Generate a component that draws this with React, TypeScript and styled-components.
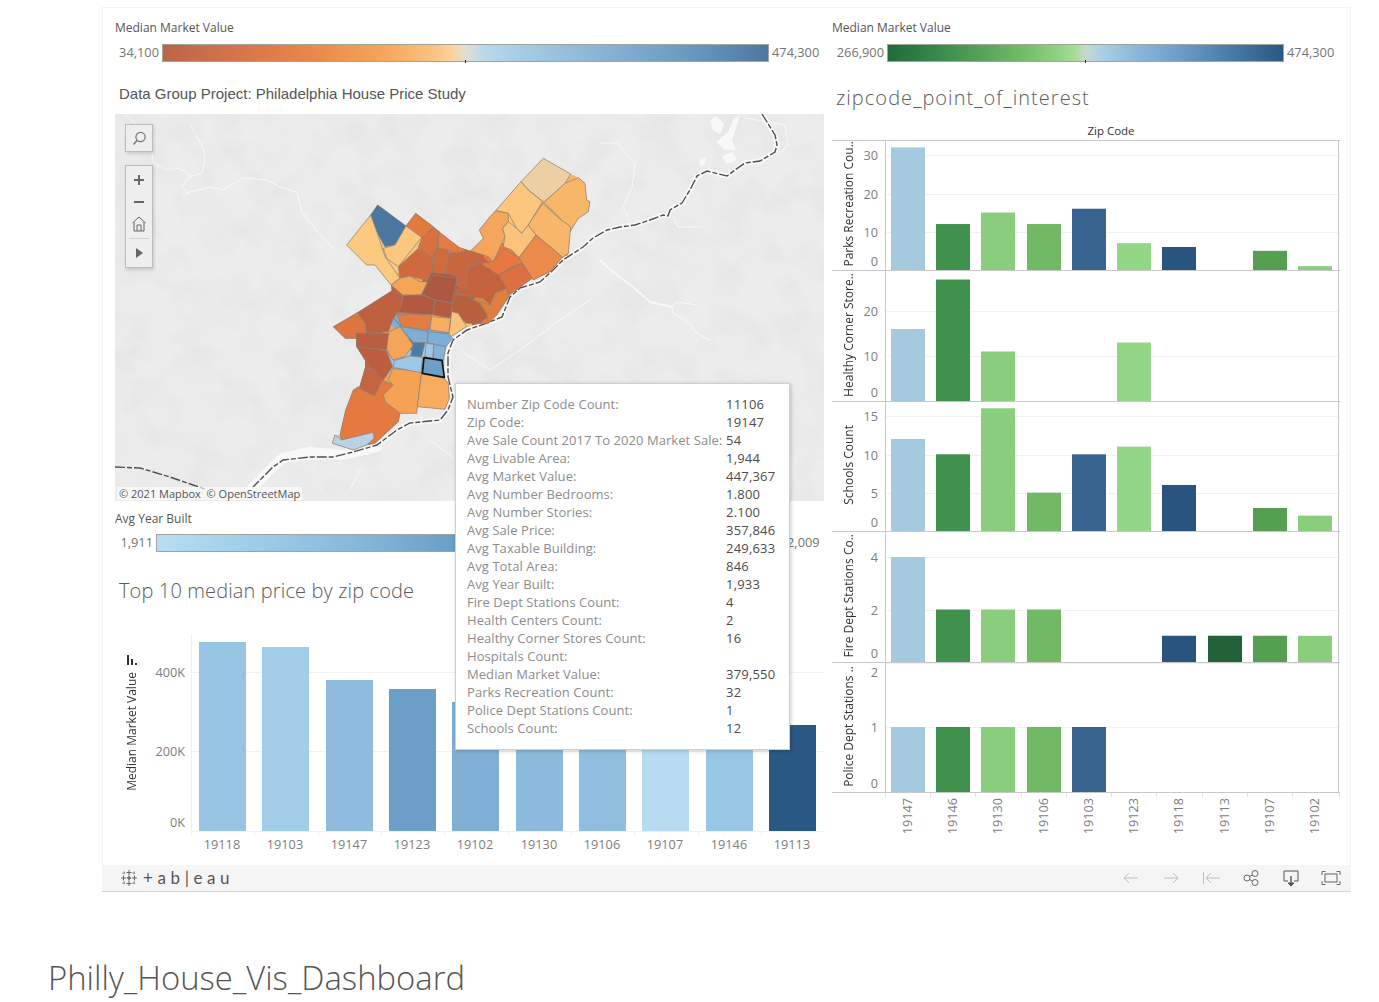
import React from "react";
import styled, { createGlobalStyle } from "styled-components";

const Global = createGlobalStyle`
  html, body { margin: 0; padding: 0; background: #fff; }
  body { font-family: "Open Sans", "Liberation Sans", sans-serif; overflow: hidden; }
`;

const Page = styled.div`
  width: 1379px;
  height: 1002px;
  padding-top: 7px;
  box-sizing: border-box;
  overflow: hidden;
`;
const VizFrame = styled.div`
  position: relative;
  box-sizing: border-box;
  width: 1249px;
  height: 858px;
  margin-left: 102px;
  border: 1px solid #f3f3f3;
  border-bottom: 0;
  padding: 12px 0 0 12px;
  display: grid;
  grid-template-columns: 709px 507px;
  column-gap: 8px;
  align-items: start;
`;
const Column = styled.div`
  display: flex;
  flex-direction: column;
`;
const LegendBox = styled.div<{ $gap?: number }>`
  margin-top: ${(p) => p.$gap ?? 0}px;
`;
const LegendTitle = styled.div<{ $mb?: number }>`
  font-size: 12px;
  line-height: 16px;
  height: 16px;
  color: #555;
  margin-bottom: ${(p) => p.$mb ?? 8}px;
`;
const LegendRow = styled.div`
  display: flex;
  height: 18px;
  align-items: center;
  font-size: 12.8px;
  color: #747474;
`;
const LegendMin = styled.span<{ $w: number }>`
  width: ${(p) => p.$w}px;
  padding: 0 3px 3px 0;
  box-sizing: border-box;
  text-align: right;
`;
const LegendMax = styled.span`
  padding: 0 0 3px 3px;
`;
const LegendBar = styled.div<{ $w: number; $gradient: string; $tick?: number }>`
  position: relative;
  box-sizing: border-box;
  width: ${(p) => p.$w}px;
  height: 18px;
  border: 1px solid #a3a39a;
  background: ${(p) => p.$gradient};
  &::after {
    content: "";
    display: ${(p) => (p.$tick ? "block" : "none")};
    position: absolute;
    left: ${(p) => p.$tick}px;
    bottom: -2px;
    width: 1px;
    height: 3px;
    background: #222;
  }
`;
const ProjectTitle = styled.div`
  box-sizing: border-box;
  height: 52px;
  padding: 0 0 11px 4px;
  display: flex;
  align-items: flex-end;
  font-family: "Liberation Sans", Arial, sans-serif;
  font-size: 15px;
  line-height: 18px;
  color: #555;
`;
const LightTitle = styled.div<{ $h: number; $pt: number; $ls?: number }>`
  box-sizing: border-box;
  height: ${(p) => p.$h}px;
  padding: ${(p) => p.$pt}px 0 0 4px;
  font-size: 20px;
  line-height: 24px;
  font-weight: 300;
  color: #5c5c5c;
  letter-spacing: ${(p) => p.$ls ?? 0}px;
`;
const MapBox = styled.div`
  position: relative;
  width: 709px;
  height: 387px;
  background: #ececec;
  overflow: hidden;
`;
const MapSvg = styled.svg`
  display: block;
`;
const MapButton = styled.div<{ $top: number; $h: number }>`
  position: absolute;
  left: 10px;
  top: ${(p) => p.$top}px;
  width: 28px;
  height: ${(p) => p.$h}px;
  box-sizing: border-box;
  background: #eeeeee;
  border: 1px solid #bdbdbd;
  box-shadow: 1px 2px 3px rgba(0, 0, 0, 0.14);
  display: flex;
  flex-direction: column;
  align-items: center;
`;
const Attribution = styled.div`
  position: absolute;
  left: 2px;
  bottom: 1px;
  padding: 0 2px;
  background: rgba(255, 255, 255, 0.62);
  font-size: 11px;
  line-height: 13px;
  color: #555;
  white-space: nowrap;
`;
const ChartRow = styled.div`
  display: flex;
  height: 230px;
`;
const YTitleColumn = styled.div`
  width: 34px;
  padding-top: 25px;
  box-sizing: border-box;
  display: flex;
  flex-direction: column;
  align-items: center;
  gap: 7px;
`;
const RotatedLabel = styled.span`
  writing-mode: vertical-rl;
  transform: rotate(180deg);
  font-size: 12px;
  line-height: 14px;
  color: #333;
  white-space: nowrap;
`;
const ZipHeader = styled.div`
  height: 16px;
  line-height: 14px;
  font-size: 11.5px;
  color: #333;
  text-align: center;
  padding-left: 50px;
  box-sizing: border-box;
  width: 508px;
`;
const Multiples = styled.div`
  width: 508px;
  box-sizing: border-box;
  border-top: 1px solid #c8c8c8;
`;
const PanelRow = styled.div<{ $h: number }>`
  display: flex;
  box-sizing: border-box;
  height: ${(p) => p.$h}px;
  border-bottom: 1px solid #c8c8c8;
`;
const PanelTitle = styled.div`
  width: 30px;
  box-sizing: border-box;
  padding: 0 0 3px 4px;
  display: flex;
  justify-content: center;
  align-items: center;
`;
const Plot = styled.svg`
  display: block;
  flex: none;
`;
const TickText = styled.text`
  font-family: "Open Sans", sans-serif;
  font-size: 12.7px;
  fill: #7d7d7d;
`;
const Tooltip = styled.div`
  position: absolute;
  left: 352px;
  top: 375px;
  box-sizing: border-box;
  width: 335px;
  height: 367px;
  padding: 11px 11px;
  background: #fff;
  border: 1px solid #cfcfcf;
  box-shadow: 1px 1px 4px rgba(0, 0, 0, 0.2);
  display: grid;
  grid-template-columns: 259px 1fr;
  grid-auto-rows: 18px;
  font-size: 13px;
  line-height: 18px;
  white-space: nowrap;
`;
const TipLabel = styled.span`
  color: #8c8c8c;
  letter-spacing: 0.06px;
`;
const TipValue = styled.span`
  color: #4c4c4c;
  letter-spacing: 0.2px;
`;
const Toolbar = styled.div`
  box-sizing: border-box;
  width: 1249px;
  height: 27px;
  margin-left: 102px;
  background: #f5f5f5;
  border-bottom: 1px solid #d4d4d4;
  display: flex;
  align-items: center;
  padding: 0 9px 1px 18px;
`;
const Brand = styled.div`
  display: flex;
  align-items: center;
  gap: 5px;
  flex: 1;
`;
const BrandText = styled.span`
  font-family: "Lato", sans-serif;
  font-weight: 400;
  font-size: 17px;
  line-height: 20px;
  letter-spacing: 4.6px;
  color: #555;
  white-space: nowrap;
`;
const ToolIcons = styled.div`
  display: flex;
  align-items: center;
  gap: 18px;
`;
const PageTitle = styled.h1`
  margin: 66px 0 0 48px;
  font-size: 32.8px;
  line-height: 40px;
  font-weight: 300;
  color: #555;
  white-space: nowrap;
`;

const orangeBlue =
  "linear-gradient(90deg,#bb644b 0%,#d5744a 12%,#e8864b 24%,#f5a45a 36%,#fcc383 45%,#fdd09a 47.5%,#e3dfd2 50%,#b9d9eb 53%,#9ec7e1 62%,#84afd2 75%,#6a96bd 88%,#4d779f 100%)";
const greenBlue =
  "linear-gradient(90deg,#1f6b3a 0%,#3f8f4e 15%,#6cb664 32%,#8bd07f 42%,#a2dd92 47%,#c8d9cc 50%,#a9d0e6 54%,#86b5d8 64%,#6b9dc6 74%,#487aa8 87%,#2a5783 100%)";
const yearBlue =
  "linear-gradient(90deg,#b8def3 0%,#9cc9e6 18%,#87b7da 32%,#6b9ec8 47%,#4d7eaa 75%,#2a5783 100%)";

const silhouette =
  "670,25 752,72 775,83 795,100 800,150 810,155 805,185 775,205 750,245 745,315 728,322 690,365 640,390 637,385 568,435 567,440 530,495 505,520 475,522 440,530 385,565 373,610 372,685 385,700 388,745 375,778 292,770 240,790 235,815 165,880 140,885 100,900 37,880 45,855 60,855 77,780 100,720 118,715 135,655 135,630 110,590 108,565 75,565 40,530 112,488 215,423 213,405 165,345 140,345 80,285 152,195 173,165 258,228 287,190 340,230 358,245 415,290 452,303 490,265 478,240 510,200 527,182 603,95";

type Poly = [string, string];
const districts: Poly[] = [
  ["#ecd0a4", "670,25 752,72 735,100 672,157 625,120 603,95"],
  ["#f8b768", "735,100 775,83 795,100 800,150 810,155 805,185 775,205 750,245 720,205 672,157"],
  ["#fbc67d", "603,95 625,120 668,155 625,225 605,250 590,235 565,190 527,182"],
  ["#f5a55c", "527,182 565,190 565,215 548,235 555,260 520,335 505,320 452,303 490,265 478,240 510,200"],
  ["#fbc27b", "565,215 590,235 605,250 625,225 648,255 597,323 575,300 550,290 555,260 548,235"],
  ["#f8b66b", "668,160 720,207 752,230 745,310 728,322 648,255 625,225"],
  ["#ec8a4c", "648,255 728,322 690,365 640,390 607,340 597,323"],
  ["#e8783f", "520,335 550,297 597,323 607,340 575,350 535,375 480,340"],
  ["#dc7040", "607,340 637,385 568,435 555,405 535,375"],
  ["#c4623d", "480,340 535,375 560,415 525,430 512,465 490,445 440,437 408,432 445,350"],
  ["#c8663f", "385,310 452,303 475,320 470,340 445,350 440,415 410,410 408,380 380,370"],
  ["#cf6c3f", "345,295 385,300 380,372 338,368"],
  ["#e37c43", "355,245 415,290 412,310 385,300 355,295"],
  ["#e27a3e", "287,190 340,230 305,265 258,228"],
  ["#d9703f", "340,233 358,245 350,295 338,325 295,292 305,265"],
  ["#d06a3e", "295,295 338,325 335,368 322,392 270,378 240,385 235,350"],
  ["#4a769f", "173,165 258,228 225,285 195,290 172,250 152,195"],
  ["#fcc981", "152,195 172,250 195,320 240,385 213,405 165,345 140,345 80,285"],
  ["#fbc67d", "258,228 305,262 235,350 200,325 190,295 225,285"],
  ["#f6a556", "213,405 240,385 270,378 300,395 322,395 305,435 248,435"],
  ["#ac5740", "340,375 410,385 400,458 345,450 305,432"],
  ["#b25a41", "248,437 305,435 345,450 340,495 230,487 243,470"],
  ["#b5593f", "345,450 398,460 392,505 340,495"],
  ["#b8613f", "400,432 440,437 480,460 505,500 475,520 440,520 395,485"],
  ["#e07d3f", "478,455 510,465 525,430 560,415 567,440 530,495 505,520 500,490"],
  ["#fbc27d", "395,485 415,490 440,530 385,565"],
  ["#be6040", "112,488 215,423 248,437 243,470 218,510 205,545 140,550 135,520"],
  ["#de7440", "40,530 112,488 135,520 140,550 108,550 108,565 75,565"],
  ["#b95e40", "110,550 205,550 205,580 200,600 110,590"],
  ["#bd5e40", "110,590 200,602 218,650 190,690 155,655 135,630"],
  ["#e57a41", "60,855 77,780 100,720 115,710 163,737 187,690 222,705 195,735 240,790 235,815 165,880 140,885 162,847 65,872"],
  ["#c56440", "135,655 155,655 188,690 163,737 118,715"],
  ["#b9d3e2", "37,880 45,855 65,870 160,847 162,865 140,885 100,900"],
  ["#f5a255", "190,735 220,705 205,690 218,655 305,665 290,790 240,790 195,755"],
  ["#f8ac5f", "305,670 373,685 385,700 388,745 375,778 292,770"],
  ["#f5a55a", "207,545 240,530 280,585 255,620 218,630 200,595"],
  ["#e37c43", "230,492 335,495 325,540 245,530"],
  ["#f7ac60", "335,500 392,505 387,548 330,540"],
  ["#7eadd5", "222,505 245,530 325,545 322,578 280,578 245,535"],
  ["#7eadd5", "325,545 387,552 398,565 378,590 322,578"],
  ["#4a7ca8", "280,578 315,578 305,620 272,618"],
  ["#9dc8e5", "318,580 342,583 338,625 315,620"],
  ["#84b3d9", "342,583 378,590 370,630 340,628"],
  ["#9cc8e5", "222,632 270,618 308,622 303,668 220,652"],
];

const toLocal = (pts: number[][]) =>
  "M" + pts.map(([x, y]) => `${x - 115},${y - 114}`).join(" L");

const borderMain = toLocal([
  [762, 114], [775, 135], [777, 145], [775, 152], [760, 161], [745, 163], [735, 170], [727, 176], [707, 171], [697, 176],
  [690, 190], [685, 198], [682, 203], [670, 210], [668, 216], [663, 215], [650, 220], [635, 225], [620, 227], [607, 230],
  [593, 238], [583, 247], [563, 260], [553, 270], [540, 282], [520, 288], [510, 297], [502, 317], [487, 323], [467, 330],
  [453, 340], [448, 353], [448, 377], [453, 397], [448, 410], [440, 420], [410, 423], [397, 430], [377, 445], [353, 452],
  [333, 457], [310, 457], [283, 460], [273, 467], [253, 487],
]);
const borderWest = toLocal([[115, 467], [140, 468], [170, 477], [193, 485], [205, 489]]);
const thinRivers = [
  [[183, 195], [190, 192], [210, 187], [223, 190], [243, 178], [267, 180], [280, 187], [297, 192], [302, 212], [318, 232], [335, 250]],
  [[152, 153], [153, 162], [167, 170], [180, 168], [190, 175], [182, 187], [190, 195]],
  [[125, 115], [135, 123], [152, 148]],
  [[190, 125], [203, 147], [205, 158], [202, 173], [190, 177]],
  [[600, 143], [617, 143], [635, 163], [632, 187], [623, 207], [628, 218]],
  [[673, 217], [678, 227], [702, 227]],
  [[672, 307], [673, 313], [690, 323], [695, 332], [703, 337], [710, 340]],
  [[672, 307], [677, 302], [697, 305]],
  [[745, 118], [785, 125], [788, 145], [775, 158]],
  [[460, 350], [490, 370], [520, 350], [560, 320], [590, 300]],
  [[430, 440], [470, 470], [500, 492]],
  [[360, 470], [350, 490]],
];
const wideRivers = [
  [[600, 260], [613, 272], [633, 287], [650, 302], [672, 307]],
];
const brightPatches = [
  [[710, 120], [716, 116], [724, 124], [720, 134], [713, 130]],
  [[716, 142], [728, 132], [734, 118], [740, 116], [732, 140], [736, 150], [725, 150]],
  [[722, 156], [732, 152], [737, 160], [726, 164]],
  [[700, 160], [706, 158], [704, 166], [699, 165]],
];

const MapView = () => (
  <MapBox>
    <MapSvg width="709" height="387">
      <defs>
        <filter id="terrain" x="0" y="0" width="100%" height="100%">
          <feTurbulence type="fractalNoise" baseFrequency="0.03" numOctaves="4" seed="7" />
          <feColorMatrix values="0 0 0 0 0.5  0 0 0 0 0.5  0 0 0 0 0.5  0.7 0 0 0 -0.27" />
        </filter>
        <clipPath id="city">
          <polygon points={silhouette} />
        </clipPath>
      </defs>
      <rect width="709" height="387" fill="#ececec" />
      <rect width="709" height="387" filter="url(#terrain)" opacity="0.4" />
      <g fill="none" stroke="#f8f8f8" strokeLinecap="round" strokeLinejoin="round">
        {thinRivers.map((r, i) => (
          <path key={i} d={toLocal(r)} strokeWidth="1" />
        ))}
        {wideRivers.map((r, i) => (
          <path key={i} d={toLocal(r)} strokeWidth="1.8" />
        ))}
        <path d={borderMain} strokeWidth="5" />
        <path d={toLocal([[253, 487], [273, 467], [283, 458], [310, 452], [343, 455], [377, 447]])} strokeWidth="10" />
        <path d={borderWest} strokeWidth="1" />
      </g>
      <g fill="#f8f8f8">
        {brightPatches.map((p, i) => (
          <path key={i} d={toLocal(p) + "Z"} />
        ))}
      </g>
      <g fill="none" stroke="#4f4f4f" strokeWidth="1.4" strokeDasharray="10 2 5 2">
        <path d={borderMain} />
        <path d={borderWest} />
      </g>
      <g transform="translate(205,36) scale(0.33333)">
        <g clipPath="url(#city)">
          {districts.map(([fill, points], i) => (
            <polygon key={i} points={points} fill={fill} stroke={fill} strokeWidth="36" strokeLinejoin="round" />
          ))}
        </g>
        {districts.map(([fill, points], i) => (
          <polygon key={i} points={points} fill={fill} stroke="#8b8178" strokeWidth="2.2" strokeLinejoin="round" />
        ))}
        <polygon points="312,623 366,631 373,682 307,670" fill="#6e9fc9" stroke="#111" strokeWidth="5" strokeLinejoin="round" />
      </g>
    </MapSvg>
    <MapButton $top={10} $h={28}>
      <svg width="26" height="26" viewBox="0 0 26 26" fill="none" stroke="#777" strokeWidth="1.2">
        <circle cx="14.5" cy="12" r="4.6" />
        <path d="M11 15.5L7.5 19.5" strokeWidth="1.5" />
      </svg>
    </MapButton>
    <MapButton $top={51} $h={103}>
      <svg width="26" height="101" viewBox="0 0 26 101" fill="none" stroke="#666">
        <path d="M13 9v10M8 14h10" strokeWidth="2" />
        <path d="M8 36h10" strokeWidth="2" />
        <path d="M6.5 57L13 51l6.500 6M8 56v9h10v-9M11 65v-6h4v6" strokeWidth="1" />
        <path d="M3 72.500h20" stroke="#d0d0d0" strokeWidth="1" />
        <path d="M10 82l7 5-7 5z" fill="#666" stroke="none" />
      </svg>
    </MapButton>
    <Attribution>© 2021 Mapbox&nbsp; © OpenStreetMap</Attribution>
  </MapBox>
);

const topZips = ["19118", "19103", "19147", "19123", "19102", "19130", "19106", "19107", "19146", "19113"];
const topValues: [number, string][] = [
  [642, "#98c4e4"], [647, "#a2cde8"], [680, "#8fbbde"], [689, "#6b9ec8"], [702, "#7fafd4"],
  [708, "#8cbadc"], [715, "#90bede"], [720, "#b7dcf1"], [722, "#99c6e5"], [725, "#2a5884"],
];

const TopChart = () => {
  const ox = 149, oy = 630;
  return (
    <ChartRow>
      <YTitleColumn>
        <svg width="10" height="10" viewBox="0 0 10 10" fill="#333">
          <rect x="0" y="0" width="2" height="10" />
          <rect x="4" y="4" width="2" height="6" />
          <rect x="8" y="8" width="2" height="2" />
        </svg>
        <RotatedLabel>Median Market Value</RotatedLabel>
      </YTitleColumn>
      <Plot width="675" height="230">
        {[672, 751, 831].map((y) => (
          <line key={y} x1={191 - ox} x2={824 - ox} y1={y - oy + 0.5} y2={y - oy + 0.5} stroke="#f1f1f1" />
        ))}
        <line x1={191 - ox + 0.5} x2={191 - ox + 0.5} y1="4" y2="206" stroke="#f0f0f0" />
        {[["400K", 672], ["200K", 751], ["0K", 822]].map(([t, y]) => (
          <TickText key={t as string} x={185 - ox} y={(y as number) - oy + 5} textAnchor="end">
            {t}
          </TickText>
        ))}
        {topZips.map((z, i) => {
          const x = 199 + i * 63.33;
          const [top, color] = topValues[i];
          return (
            <g key={z}>
              <rect x={Math.round(x) - ox} y={top - oy} width="47" height={831 - top} fill={color} />
              <TickText x={Math.round(x) + 23 - ox} y={849 - oy} textAnchor="middle">
                {z}
              </TickText>
              <line x1={Math.round(x) - 8 - ox + 0.5} x2={Math.round(x) - 8 - ox + 0.5} y1="201" y2="206" stroke="#f0f0f0" />
            </g>
          );
        })}
      </Plot>
    </ChartRow>
  );
};

const barColors = ["#a5c9df", "#41914e", "#8acd7c", "#72b966", "#38648f", "#93d686", "#29547f", "#216238", "#559f50", "#8acd7c"];
const barX = [891, 936, 981, 1027, 1072, 1117, 1162, 1208, 1253, 1298];
const zipOrder = ["19147", "19146", "19130", "19106", "19103", "19123", "19118", "19113", "19107", "19102"];

type Panel = {
  title: string;
  top: number;
  base: number;
  unit: number;
  height: number;
  values: number[];
  ticks: [string, number, number][];
};
const panels: Panel[] = [
  { title: "Parks Recreation Cou..", top: 141, base: 270, unit: 3.83, height: 130, values: [32, 12, 15, 12, 16, 7, 6, 0, 5, 1],
    ticks: [["30", 155, 155], ["20", 194, 194], ["10", 232, 232], ["0", 270, 261]] },
  { title: "Healthy Corner Store..", top: 271, base: 401, unit: 4.5, height: 131, values: [16, 27, 11, 0, 0, 13, 0, 0, 0, 0],
    ticks: [["20", 311, 311], ["10", 356, 356], ["0", 401, 392]] },
  { title: "Schools Count", top: 402, base: 531, unit: 7.67, height: 130, values: [12, 10, 16, 5, 10, 11, 6, 0, 3, 2],
    ticks: [["15", 416, 416], ["10", 455, 455], ["5", 493, 493], ["0", 531, 522]] },
  { title: "Fire Dept Stations Co..", top: 532, base: 662, unit: 26.25, height: 131, values: [4, 2, 2, 2, 0, 0, 1, 1, 1, 1],
    ticks: [["4", 557, 557], ["2", 610, 610], ["0", 662, 653]] },
  { title: "Police Dept Stations ..", top: 663, base: 792, unit: 65, height: 130, values: [1, 1, 1, 1, 1, 0, 0, 0, 0, 0],
    ticks: [["2", 663, 672], ["1", 727, 727], ["0", 792, 783]] },
];

const PanelView = ({ panel }: { panel: Panel }) => {
  const ox = 862;
  return (
    <PanelRow $h={panel.height}>
      <PanelTitle>
        <RotatedLabel>{panel.title}</RotatedLabel>
      </PanelTitle>
      <Plot width="477" height={panel.height - 1}>
        {panel.ticks.map(([t, y]) => (
          <line key={t} x1={885 - ox} x2="477" y1={y - panel.top + 0.5} y2={y - panel.top + 0.5} stroke="#f1f1f1" />
        ))}
        {panel.values.map((v, i) =>
          v > 0 ? (
            <rect
              key={i}
              x={barX[i] - ox}
              y={panel.base - v * panel.unit - panel.top}
              width="34"
              height={v * panel.unit}
              fill={barColors[i]}
            />
          ) : null
        )}
        <line x1={885 - ox + 0.5} x2={885 - ox + 0.5} y1="0" y2={panel.height} stroke="#c8c8c8" />
        <line x1="476.500" x2="476.500" y1="0" y2={panel.height} stroke="#c8c8c8" />
        {panel.ticks.map(([t, , y]) => (
          <TickText key={t} x={878 - ox} y={y - panel.top + 5} textAnchor="end">
            {t}
          </TickText>
        ))}
      </Plot>
    </PanelRow>
  );
};

const XAxis = () => (
  <Plot width="508" height="45">
    {barX.map((x, i) => (
      <g key={x}>
        <line x1={x - 6 - 832 + 0.5} x2={x - 6 - 832 + 0.5} y1="0" y2="4" stroke="#e2e2e2" />
        <TickText
          transform={`translate(${x + 21 - 832},5) rotate(-90)`}
          textAnchor="end"
        >
          {zipOrder[i]}
        </TickText>
      </g>
    ))}
    <line x1="507.500" x2="507.500" y1="0" y2="4" stroke="#e2e2e2" />
  </Plot>
);

const tipRows: [string, string][] = [
  ["Number Zip Code Count:", "11106"],
  ["Zip Code:", "19147"],
  ["Ave Sale Count 2017 To 2020 Market Sale:", "54"],
  ["Avg Livable Area:", "1,944"],
  ["Avg Market Value:", "447,367"],
  ["Avg Number Bedrooms:", "1.800"],
  ["Avg Number Stories:", "2.100"],
  ["Avg Sale Price:", "357,846"],
  ["Avg Taxable Building:", "249,633"],
  ["Avg Total Area:", "846"],
  ["Avg Year Built:", "1,933"],
  ["Fire Dept Stations Count:", "4"],
  ["Health Centers Count:", "2"],
  ["Healthy Corner Stores Count:", "16"],
  ["Hospitals Count:", ""],
  ["Median Market Value:", "379,550"],
  ["Parks Recreation Count:", "32"],
  ["Police Dept Stations Count:", "1"],
  ["Schools Count:", "12"],
];

const TableauMark = () => (
  <svg width="18" height="18" viewBox="0 0 18 18" fill="none" stroke="#666" strokeWidth="1">
    <path d="M9 1v5M6.500 3.500h5M9 12v5M6.500 14.500h5M1 9h5M3.500 6.500v5M12 9h5M14.500 6.500v5" />
    <path d="M9 6.500v5M6.800 9h4.400" strokeWidth="1.400" />
    <path d="M4 2.500v3M2.500 4h3M14 2.500v3M12.500 4h3M4 12.500v3M2.500 14h3M14 12.500v3M12.500 14h3" strokeDasharray="1 .6" />
  </svg>
);

const Icon = ({ w, children, stroke = "#666" }: { w: number; children: React.ReactNode; stroke?: string }) => (
  <svg width={w} height="20" viewBox={`0 0 ${w} 20`} fill="none" stroke={stroke} strokeWidth="1">
    {children}
  </svg>
);

export default function App() {
  return (
    <Page>
      <Global />
      <VizFrame>
        <Column>
          <LegendBox>
            <LegendTitle>Median Market Value</LegendTitle>
            <LegendRow>
              <LegendMin $w={47}>34,100</LegendMin>
              <LegendBar $w={607} $gradient={orangeBlue} $tick={302} />
              <LegendMax>474,300</LegendMax>
            </LegendRow>
          </LegendBox>
          <ProjectTitle>Data Group Project: Philadelphia House Price Study</ProjectTitle>
          <MapView />
          <LegendBox $gap={10}>
            <LegendTitle $mb={7}>Avg Year Built</LegendTitle>
            <LegendRow>
              <LegendMin $w={41}>1,911</LegendMin>
              <LegendBar $w={628} $gradient={yearBlue} />
              <LegendMax>2,009</LegendMax>
            </LegendRow>
          </LegendBox>
          <LightTitle $h={78} $pt={27} $ls={0.13}>Top 10 median price by zip code</LightTitle>
          <TopChart />
        </Column>
        <Column>
          <LegendBox>
            <LegendTitle>Median Market Value</LegendTitle>
            <LegendRow>
              <LegendMin $w={55}>266,900</LegendMin>
              <LegendBar $w={397} $gradient={greenBlue} $tick={197} />
              <LegendMax>474,300</LegendMax>
            </LegendRow>
          </LegendBox>
          <LightTitle $h={62} $pt={24} $ls={1.05}>zipcode_point_of_interest</LightTitle>
          <ZipHeader>Zip Code</ZipHeader>
          <Multiples>
            {panels.map((p) => (
              <PanelView key={p.title} panel={p} />
            ))}
          </Multiples>
          <XAxis />
        </Column>
        <Tooltip>
          {tipRows.map(([k, v]) => (
            <React.Fragment key={k}>
              <TipLabel>{k}</TipLabel>
              <TipValue>{v}</TipValue>
            </React.Fragment>
          ))}
        </Tooltip>
      </VizFrame>
      <Toolbar>
        <Brand>
          <TableauMark />
          <BrandText>+ab|eau</BrandText>
        </Brand>
        <ToolIcons>
          <Icon w={22} stroke="#bdbdbd"><path d="M4 10h14M9 5l-5 5 5 5" /></Icon>
          <Icon w={22} stroke="#bdbdbd"><path d="M4 10h14M13 5l5 5-5 5" /></Icon>
          <Icon w={22} stroke="#bdbdbd"><path d="M3.500 4v12M6 10h14M11 5l-5 5 5 5" /></Icon>
          <Icon w={22}>
            <circle cx="7" cy="10" r="3" /><circle cx="15" cy="5.500" r="3" /><circle cx="15" cy="14.500" r="3" />
            <path d="M9.600 8.500l2.800-1.500M9.600 11.500l2.800 1.500" />
          </Icon>
          <Icon w={22} stroke="#555">
            <path d="M8 13H4V3h14v10h-4" />
            <path d="M11 8v9" strokeWidth="1.400" />
            <path d="M8 15h6l-3 3z" fill="#555" />
          </Icon>
          <Icon w={22}>
            <rect x="5" y="6" width="12" height="8" />
            <path d="M2 7V3.500h3.500M16.500 3.500H20V7M20 13v3.500h-3.500M5.500 16.500H2V13" />
          </Icon>
        </ToolIcons>
      </Toolbar>
      <PageTitle>Philly_House_Vis_Dashboard</PageTitle>
    </Page>
  );
}
